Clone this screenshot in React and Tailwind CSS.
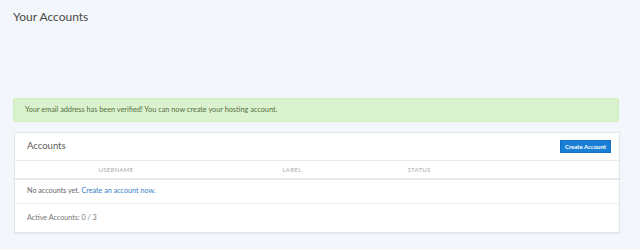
export default function App() {
  return (
    <div
      className="w-full h-[250px] bg-[#f3f6fb] px-[13px] pt-[9px] text-[#555]"
      style={{ fontFamily: 'Lato, "Liberation Sans", sans-serif' }}
    >
      <h1 className="text-[12px] leading-[16px] text-[#4a4a4a]">Your Accounts</h1>

      <div className="mt-[73px] h-[24px] w-[606px] rounded-[2px] border border-[#cfeec0] bg-[#daf2cd] pl-[11px] flex items-center text-[7.3px] text-[#566f44]">
        Your email address has been verified! You can now create your hosting account.
      </div>

      <div className="mt-[10px] w-[606px] ml-px bg-white border border-[#e2e6ec] shadow-[0_1px_1px_rgba(0,0,0,0.05)]">
        <div className="h-[28px] flex items-center justify-between pl-[12px] pr-[8px] border-b border-[#e6e9ee]">
          <span className="text-[9.5px] text-[#5a5a5a]">Accounts</span>
          <button className="h-[13px] w-[51px] bg-[#1a7fd6] border border-[#1570c0] text-white text-[6px] font-bold leading-none">
            Create Account
          </button>
        </div>
        <div className="grid grid-cols-[202px_150px_104px_1fr] h-[19px] items-center border-b-2 border-[#e4e7ec] text-[6px] tracking-[0.3px] text-[#aaa]">
          <span className="text-center">USERNAME</span>
          <span className="text-center">LABEL</span>
          <span className="text-center">STATUS</span>
          <span></span>
        </div>
        <div className="h-[24px] flex items-center pl-[12px] text-[7.2px] text-[#666] border-b border-[#eef0f3]">
          No accounts yet.&nbsp;<span className="text-[#3b82c8]">Create an account now.</span>
        </div>
        <div className="h-[28px] flex items-center pl-[12px] text-[7.2px] text-[#777]">
          Active Accounts: 0 / 3
        </div>
      </div>
    </div>
  );
}
